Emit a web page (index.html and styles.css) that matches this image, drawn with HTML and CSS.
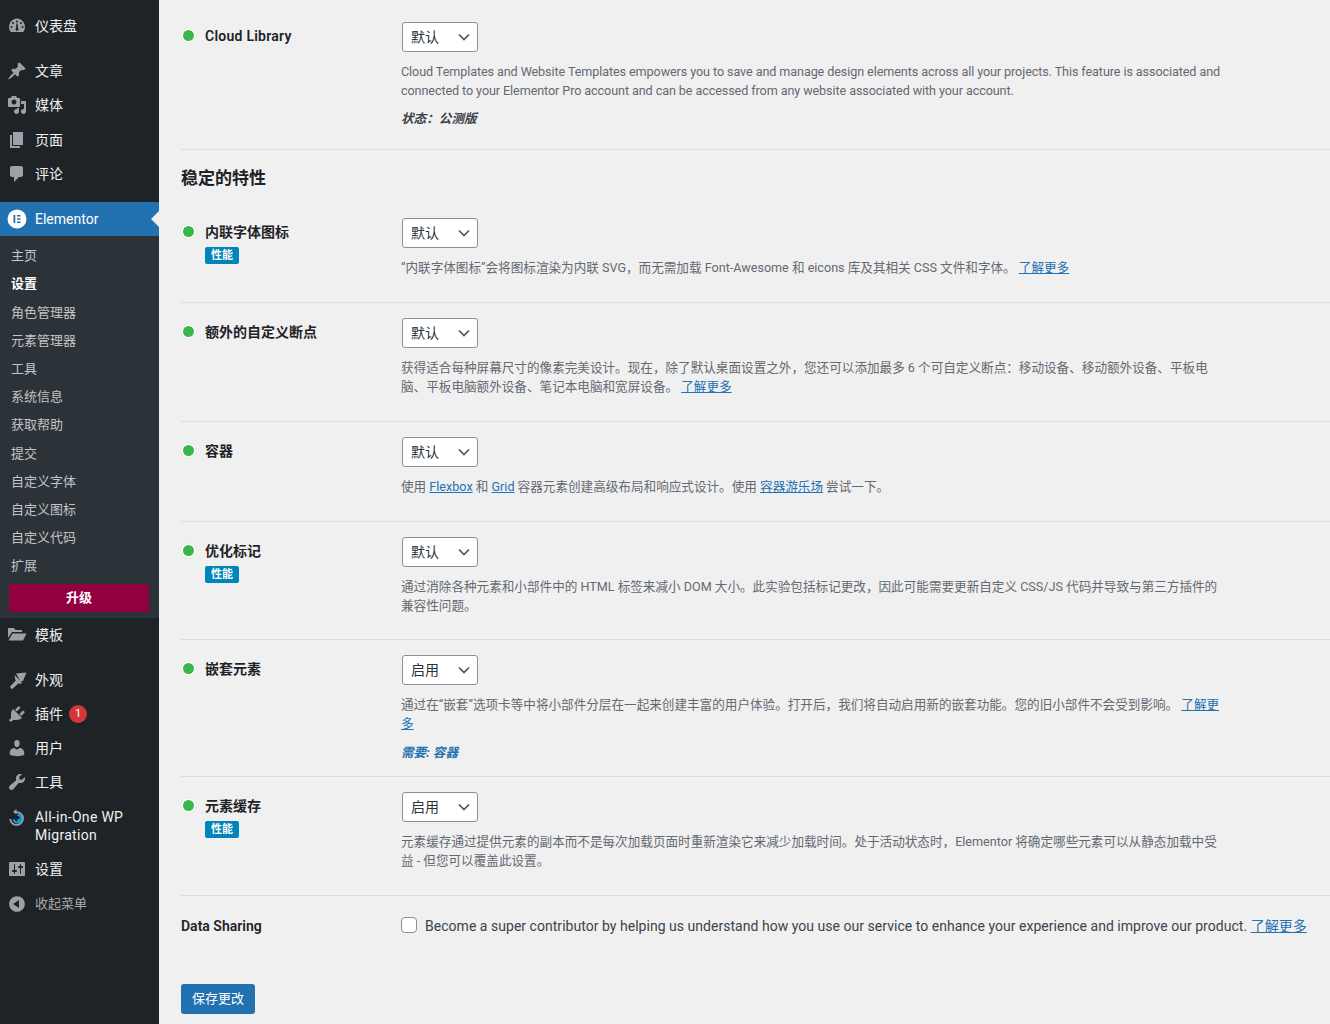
FILE: index.html
```html
<!DOCTYPE html>
<html lang="zh-CN">
<head>
<meta charset="utf-8">
<title>Elementor 设置</title>
<link rel="stylesheet" href="styles.css">
</head>
<body>
<div class="shell">
<nav class="side">
  <ul class="menu first">
    <li class="item"><svg class="ico" viewBox="0 0 20 20"><path fill-rule="evenodd" d="M3.760 16h12.480c1.100-1.430 1.760-3.210 1.760-5.150 0-4.680-3.800-8.470-8-8.470s-8 3.790-8 8.470c0 1.940.66 3.720 1.760 5.150zM10 4.500a1 1 0 1 1 0 2 1 1 0 0 1 0-2zM6 6a1 1 0 1 1 0 2 1 1 0 0 1 0-2zm8 0a1 1 0 1 1 0 2 1 1 0 0 1 0-2zM4.500 10a1 1 0 1 1 0 2 1 1 0 0 1 0-2zm11 0a1 1 0 1 1 0 2 1 1 0 0 1 0-2zM9.400 7.500h1.200l.4 4.700a1.500 1.500 0 1 1-2 0z"/></svg><span>仪表盘</span></li>
  </ul>
  <ul class="menu">
    <li class="item"><svg class="ico" viewBox="0 0 20 20"><path d="M10.440 3.020l1.820-1.820 6.360 6.350-1.830 1.820c-1.050-.68-2.480-.57-3.410.36l-.75.75c-.92.93-1.040 2.350-.35 3.410l-1.830 1.820-2.410-2.410-2.800 2.790c-.42.42-3.380 2.710-3.800 2.290s1.860-3.390 2.280-3.810l2.790-2.790L4.100 9.360l1.830-1.820c1.050.69 2.480.57 3.400-.36l.75-.75c.93-.92 1.050-2.350.36-3.410z"/></svg><span>文章</span></li>
    <li class="item media"><svg class="ico" viewBox="0 0 20 20"><path fill-rule="evenodd" d="M13 11V4c0-.55-.45-1-1-1h-1.670L9 1H5L3.670 3H2c-.55 0-1 .45-1 1v7c0 .55.45 1 1 1h10c.55 0 1-.45 1-1zM7 4.500c1.380 0 2.500 1.120 2.500 2.500S8.380 9.500 7 9.500 4.500 8.380 4.500 7 5.620 4.500 7 4.500z"/><path d="M14 6h5v10.500c0 1.380-1.120 2.500-2.500 2.500S14 17.880 14 16.500s1.120-2.500 2.500-2.500c.17 0 .34.020.5.050V9h-3V6zm-4 8.050V13h2v3.500c0 1.380-1.120 2.500-2.500 2.500S7 17.880 7 16.500 8.120 14 9.500 14c.17 0 .34.020.5.050z"/></svg><span>媒体</span></li>
    <li class="item"><svg class="ico" viewBox="0 0 20 20"><path d="M6 15V2h10v13H6zm-1 1h8v2H3V5h2v11z"/></svg><span>页面</span></li>
    <li class="item"><svg class="ico" viewBox="0 0 20 20"><path d="M5 2h9c1.100 0 2 .9 2 2v7c0 1.100-.9 2-2 2h-2l-5 5v-5H5c-1.100 0-2-.9-2-2V4c0-1.100.9-2 2-2z"/></svg><span>评论</span></li>
  </ul>
  <ul class="menu">
    <li class="item current"><svg class="ico" viewBox="0 0 20 20"><circle cx="10" cy="10" r="9.500" fill="#fff"/><path d="M6.500 6h1.800v8H6.500zM10 6h3.500v1.600H10zM10 9.200h3.500v1.600H10zM10 12.400h3.500V14H10z" fill="#2271b1"/></svg><span>Elementor</span></li>
    <li class="subwrap">
      <ul class="sub">
        <li>主页</li>
        <li class="on">设置</li>
        <li>角色管理器</li>
        <li>元素管理器</li>
        <li>工具</li>
        <li>系统信息</li>
        <li>获取帮助</li>
        <li>提交</li>
        <li>自定义字体</li>
        <li>自定义图标</li>
        <li>自定义代码</li>
        <li>扩展</li>
      </ul>
      <div class="upgrade">升级</div>
    </li>
    <li class="item"><svg class="ico" viewBox="0 0 20 20"><path d="M1 3h6l1.500 2H15v2H5L1 13z"/><path d="M5.500 8.500H19.500L16 15.500H1.500z"/></svg><span>模板</span></li>
  </ul>
  <ul class="menu">
    <li class="item"><svg class="ico" viewBox="0 0 20 20"><path d="M9 3.500 19.500 2.500 16 11l-2.500.5z"/><path d="M7.500 5 15 12.500l-1.500 1.500-2-.8-5.500 5.300c-1.300 1.200-3.700-1.200-2.500-2.500l5.300-5.500-.8-2z"/></svg><span>外观</span></li>
    <li class="item"><svg class="ico" viewBox="0 0 20 20"><path d="M13.110 4.360L9.870 7.600 8 5.730l3.240-3.240c.35-.34 1.050-.2 1.560.32.52.51.66 1.210.31 1.550zm-8 1.770l.91-1.120 9.010 9.010-1.190.84c-.71.710-2.630 1.160-3.820 1.160H6.140L4.900 17.260c-.59.590-1.540.59-2.120 0-.59-.58-.59-1.530 0-2.120l1.240-1.240v-3.880c0-1.130.4-3.050 1.090-3.890zm7.260 3.970l3.240-3.240c.34-.35 1.040-.21 1.550.31.52.510.66 1.210.31 1.550l-3.240 3.250z"/></svg><span>插件</span><b class="badge">1</b></li>
    <li class="item"><svg class="ico" viewBox="0 0 20 20"><path d="M10 9.250c-2.270 0-2.730-3.440-2.730-3.440C7 4.020 7.820 2 9.970 2c2.160 0 2.980 2.020 2.710 3.810 0 0-.41 3.440-2.680 3.440zm0 2.570L12.720 10c2.390 0 4.520 2.330 4.520 4.530v2.490s-3.650 1.130-7.240 1.130c-3.650 0-7.240-1.130-7.240-1.130v-2.490c0-2.250 1.940-4.480 4.470-4.480z"/></svg><span>用户</span></li>
    <li class="item"><svg class="ico" viewBox="0 0 20 20"><path d="M16.680 9.770c-1.340 1.340-3.300 1.670-4.950.99l-5.410 6.520c-.99.990-2.590.990-3.580 0s-.99-2.590 0-3.570l6.520-5.420c-.68-1.650-.35-3.610.99-4.950 1.280-1.280 3.120-1.640 4.720-1.100l-2.810 2.810.35 2.470 2.470.35 2.810-2.810c.54 1.600.18 3.440-1.110 4.710z"/></svg><span>工具</span></li>
    <li class="item tall"><svg class="ico aio" viewBox="0 0 20 20"><path d="M9.500 1 6 3.800l3.500 2.800V5A5.500 5.500 0 1 1 4.100 11H2.300A7.300 7.300 0 1 0 9.500 3.200z"/><path class="aio-ring" d="M10.500 7a3.800 3.800 0 1 1-3.800 4.300"/><path class="aio-arrow" d="M9.800 12.500l3-2.800v5z"/></svg><span>All-in-One WP Migration</span></li>
    <li class="item"><svg class="ico" viewBox="0 0 20 20"><path d="M18 16V4c0-.55-.45-1-1-1H3c-.55 0-1 .45-1 1v12c0 .55.45 1 1 1h14c.55 0 1-.45 1-1zM8 11h1c.55 0 1 .45 1 1s-.45 1-1 1H8v1.500c0 .28-.22.5-.5.5s-.5-.22-.5-.5V13H6c-.55 0-1-.45-1-1s.45-1 1-1h1V5.500c0-.28.22-.5.5-.5s.5.22.5.5V11zm5-2h-1c-.55 0-1-.45-1-1s.45-1 1-1h1V5.500c0-.28.22-.5.5-.5s.5.22.5.5V7h1c.55 0 1 .45 1 1s-.45 1-1 1h-1v5.500c0 .28-.22.5-.5.5s-.5-.22-.5-.5V9z" fill-rule="evenodd"/></svg><span>设置</span></li>
    <li class="item collapse"><svg class="ico" viewBox="0 0 20 20"><path fill-rule="evenodd" d="M10 2.160c4.330 0 7.840 3.510 7.840 7.840s-3.510 7.840-7.840 7.840S2.160 14.330 2.160 10 5.670 2.160 10 2.160zM12 14V6l-6 4z"/></svg><span>收起菜单</span></li>
  </ul>
</nav>
<main class="main">
  <section class="row r-cloud">
    <div class="label"><i class="dot"></i><div><div class="name latin">Cloud Library</div></div></div>
    <div class="field">
      <div class="select">默认<svg viewBox="0 0 12 8"><path d="M1 1.500 6 6.500l5-5"/></svg></div>
      <p class="desc en">Cloud Templates and Website Templates empowers you to save and manage design elements across all your projects. This feature is associated and connected to your Elementor Pro account and can be accessed from any website associated with your account.</p>
      <p class="status">状态：公测版</p>
    </div>
  </section>
  <h2 class="heading">稳定的特性</h2>
  <section class="row r-short">
    <div class="label"><i class="dot"></i><div><div class="name">内联字体图标</div><span class="tag">性能</span></div></div>
    <div class="field">
      <div class="select">默认<svg viewBox="0 0 12 8"><path d="M1 1.500 6 6.500l5-5"/></svg></div>
      <p class="desc">“内联字体图标”会将图标渲染为内联 SVG，而无需加载 Font-Awesome 和 eicons 库及其相关 CSS 文件和字体。 <a>了解更多</a></p>
    </div>
  </section>
  <section class="row r-bp">
    <div class="label"><i class="dot"></i><div><div class="name">额外的自定义断点</div></div></div>
    <div class="field">
      <div class="select">默认<svg viewBox="0 0 12 8"><path d="M1 1.500 6 6.500l5-5"/></svg></div>
      <p class="desc">获得适合每种屏幕尺寸的像素完美设计。现在，除了默认桌面设置之外，您还可以添加最多 6 个可自定义断点：移动设备、移动额外设备、平板电脑、平板电脑额外设备、笔记本电脑和宽屏设备。 <a>了解更多</a></p>
    </div>
  </section>
  <section class="row r-short">
    <div class="label"><i class="dot"></i><div><div class="name">容器</div></div></div>
    <div class="field">
      <div class="select">默认<svg viewBox="0 0 12 8"><path d="M1 1.500 6 6.500l5-5"/></svg></div>
      <p class="desc">使用 <a>Flexbox</a> 和 <a>Grid</a> 容器元素创建高级布局和响应式设计。使用 <a>容器游乐场</a> 尝试一下。</p>
    </div>
  </section>
  <section class="row r-markup">
    <div class="label"><i class="dot"></i><div><div class="name">优化标记</div><span class="tag">性能</span></div></div>
    <div class="field">
      <div class="select">默认<svg viewBox="0 0 12 8"><path d="M1 1.500 6 6.500l5-5"/></svg></div>
      <p class="desc">通过消除各种元素和小部件中的 HTML 标签来减小 DOM 大小。此实验包括标记更改，因此可能需要更新自定义 CSS/JS 代码并导致与第三方插件的兼容性问题。</p>
    </div>
  </section>
  <section class="row r-nested">
    <div class="label"><i class="dot"></i><div><div class="name">嵌套元素</div></div></div>
    <div class="field">
      <div class="select">启用<svg viewBox="0 0 12 8"><path d="M1 1.500 6 6.500l5-5"/></svg></div>
      <p class="desc">通过在“嵌套”选项卡等中将小部件分层在一起来创建丰富的用户体验。打开后，我们将自动启用新的嵌套功能。您的旧小部件不会受到影响。 <a>了解更多</a></p>
      <p class="status req">需要: 容器</p>
    </div>
  </section>
  <section class="row r-bp">
    <div class="label"><i class="dot"></i><div><div class="name">元素缓存</div><span class="tag">性能</span></div></div>
    <div class="field">
      <div class="select">启用<svg viewBox="0 0 12 8"><path d="M1 1.500 6 6.500l5-5"/></svg></div>
      <p class="desc">元素缓存通过提供元素的副本而不是每次加载页面时重新渲染它来减少加载时间。处于活动状态时，Elementor 将确定哪些元素可以从静态加载中受益 - 但您可以覆盖此设置。</p>
    </div>
  </section>
  <section class="share">
    <div class="share-label">Data Sharing</div>
    <div class="share-field"><i class="check"></i><span>Become a super contributor by helping us understand how you use our service to enhance your experience and improve our product. <a>了解更多</a></span></div>
  </section>
  <button class="save" type="button">保存更改</button>
</main>
</div>
</body>
</html>
```
FILE: styles.css
```css
* { box-sizing: border-box; }
html, body { margin: 0; padding: 0; height: 1024px; overflow: hidden; background: #f0f0f1; }
body { font: 14px/19px Roboto, "Noto Sans CJK SC", sans-serif; color: #3c434a; }
ul { list-style: none; margin: 0; padding: 0; }
p { margin: 0; }
.shell { display: flex; height: 1024px; }

.side { width: 159px; flex: none; background: #1d2327; color: #f0f0f1; padding-top: 9px; }
.menu { margin-bottom: 11px; }
.item { position: relative; display: flex; align-items: center; min-height: 34px; padding-left: 7px; gap: 8px; font-size: 14px; line-height: 18px; }
.item.media { min-height: 35px; padding-bottom: 1px; }
.ico { width: 20px; height: 20px; flex: none; fill: #9ca1a7; }
.aio-ring { fill: none; stroke: #0fa5e9; stroke-width: 2; }
.aio-arrow { fill: #0fa5e9; }
.item.current { background: #2271b1; color: #fff; }
.item.current::after { content: ""; position: absolute; right: 0; top: 9px; border: 8px solid transparent; border-right-color: #f0f0f1; border-left-width: 0; }
.item.tall { min-height: 53px; align-items: flex-start; padding-top: 9px; letter-spacing: .3px; }
.item.tall span { width: 112px; }
.item.collapse { color: #a7aaad; font-size: 13px; padding-top: 1px; }
.badge { width: 18px; height: 18px; border-radius: 50%; background: #d63638; color: #fff; font: 400 11px/18px Roboto, sans-serif; text-align: center; margin-left: -2px; }
.subwrap { background: #2c3338; padding: 6.3px 0 6.7px; }
.sub li { height: 28.2px; padding-left: 11px; font-size: 13px; line-height: 28px; color: #c3c4c7; }
.sub li.on { color: #fff; font-weight: 600; }
.upgrade { margin: 3px 10px 0 9px; height: 28px; background: #93003f; color: #fff; font-weight: 700; font-size: 13px; line-height: 28px; text-align: center; }

.main { flex: 1; min-width: 0; padding-left: 22px; }
.row { display: flex; border-bottom: 1px solid #dcdcde; padding-top: 15px; }
.r-cloud { height: 150px; padding-top: 22px; }
.r-short { height: 100px; }
.r-bp { height: 119px; }
.r-markup { height: 118px; }
.r-nested { height: 137px; }
.heading { margin: 0; height: 53px; padding-top: 17px; font-size: 17px; line-height: 23px; font-weight: 700; color: #1d2327; }
.label { width: 221px; flex: none; display: flex; gap: 11px; padding-top: 5px; }
.dot { width: 11px; height: 11px; margin: 3px 0 0 2px; flex: none; border-radius: 50%; background: #39b54a; box-shadow: 0 0 0 1.5px #fff, 0 0 3px 1px rgba(0, 0, 0, .12); }
.name { font-weight: 600; color: #1d2327; font-size: 14px; line-height: 19px; }
.name.latin { letter-spacing: .25px; }
.tag { display: block; width: 34px; height: 17px; margin-top: 5px; border-radius: 2px; background: #0085ba; color: #fff; font-size: 11px; line-height: 17px; font-weight: 700; text-align: center; }
.field { width: 820px; flex: none; }
.select { width: 76px; height: 30px; padding: 0 7px 0 8px; display: flex; align-items: center; justify-content: space-between; background: #fff; border: 1px solid #8c8f94; border-radius: 3px; color: #2c3338; font-size: 14px; }
.select svg { width: 12px; height: 8px; fill: none; stroke: #50575e; stroke-width: 1.700; }
.desc { margin: 11px 0 0 -1px; font-size: 12.6px; line-height: 18.5px; color: #646970; }
.desc.en { letter-spacing: -.09px; }
.desc a, .share a { color: #2271b1; text-decoration: underline; }
.status { margin: 9px 0 0 -1px; font-size: 12.6px; font-weight: 700; font-style: italic; color: #3c434a; }
.status.req { margin-top: 10px; color: #2271b1; }
.share { display: flex; height: 63px; padding-top: 21px; margin-bottom: 25px; }
.share-label { width: 220px; flex: none; font-weight: 600; color: #1d2327; }
.share-field { display: flex; gap: 8px; white-space: nowrap; font-size: 14px; letter-spacing: .03px; }
.check { width: 16px; height: 16px; background: #fff; border: 1px solid #8c8f94; border-radius: 4px; flex: none; }
.save { display: block; width: 74px; height: 30px; padding: 0; border: 0; border-radius: 3px; background: #2271b1; color: #fff; font: 13px/30px Roboto, "Noto Sans CJK SC", sans-serif; }
```
